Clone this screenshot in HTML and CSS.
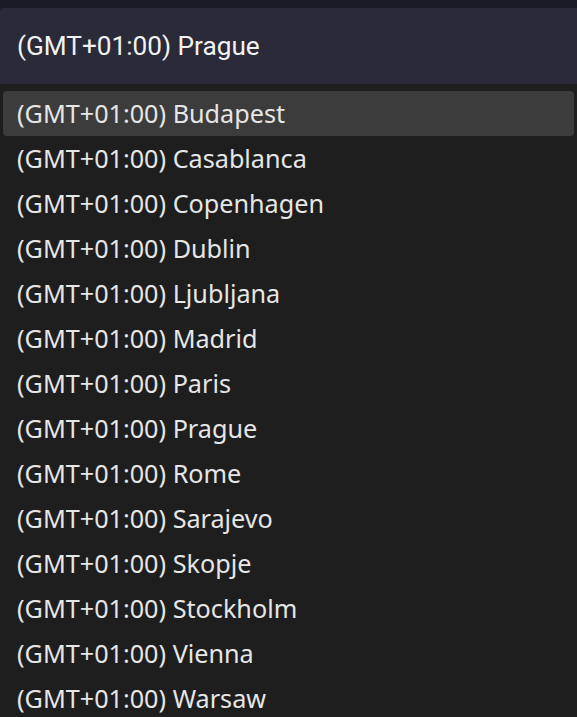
FILE: index.html
```html
<!DOCTYPE html>
<html>
<head>
<meta charset="utf-8">
<link rel="stylesheet" href="styles.css">
</head>
<body>
<div class="page">
  <div class="select">(GMT+01:00) Prague</div>
  <ul class="options">
    <li class="option active">(GMT+01:00) Budapest</li>
    <li class="option">(GMT+01:00) Casablanca</li>
    <li class="option">(GMT+01:00) Copenhagen</li>
    <li class="option">(GMT+01:00) Dublin</li>
    <li class="option">(GMT+01:00) Ljubljana</li>
    <li class="option">(GMT+01:00) Madrid</li>
    <li class="option">(GMT+01:00) Paris</li>
    <li class="option">(GMT+01:00) Prague</li>
    <li class="option">(GMT+01:00) Rome</li>
    <li class="option">(GMT+01:00) Sarajevo</li>
    <li class="option">(GMT+01:00) Skopje</li>
    <li class="option">(GMT+01:00) Stockholm</li>
    <li class="option">(GMT+01:00) Vienna</li>
    <li class="option">(GMT+01:00) Warsaw</li>
  </ul>
</div>
</body>
</html>
```
FILE: styles.css
```css
html, body {
  margin: 0;
  padding: 0;
  background: #1e1e1e;
  overflow: hidden;
}
.page {
  width: 577px;
  height: 717px;
  background: #1b1b25;
  padding-top: 8px;
  box-sizing: border-box;
  overflow: hidden;
}
.select {
  height: 76px;
  background: #2a2a38;
  border-top-left-radius: 4px;
  color: #f2f2f2;
  font-family: Roboto, sans-serif;
  font-size: 26.2px;
  line-height: 76px;
  padding-left: 17px;
  box-sizing: border-box;
}
.options {
  list-style: none;
  margin: 0;
  padding: 7px 3px 0 3px;
  background: #1e1e1e;
  height: 633px;
  box-sizing: border-box;
}
.option {
  height: 45px;
  line-height: 44px;
  padding-left: 14px;
  color: #e6e6e6;
  font-family: "Noto Sans", sans-serif;
  font-size: 25.2px;
  border-radius: 4px;
  white-space: nowrap;
}
.option.active {
  background: #3c3c3c;
}
```
